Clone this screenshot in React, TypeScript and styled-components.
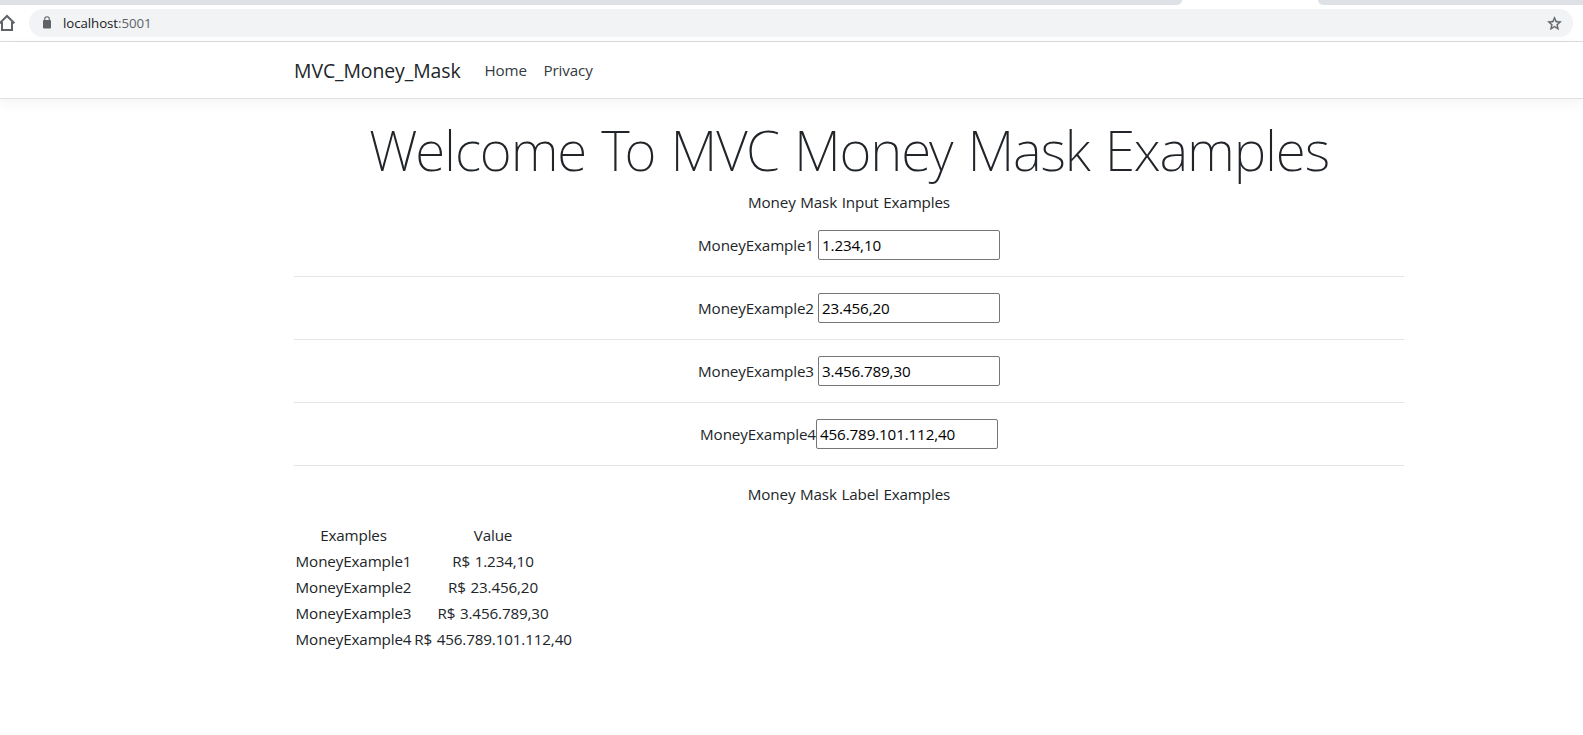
import React from "react";
import styled, { createGlobalStyle } from "styled-components";

const GlobalStyle = createGlobalStyle`
  *, *::before, *::after { box-sizing: border-box; }
  body {
    margin: 0;
    background: #fff;
    color: #212529;
    font-family: "Segoe UI", "Open Sans", "Noto Sans", sans-serif;
    font-size: 15.2px;
    font-weight: 370;
    line-height: 24px;
    letter-spacing: -0.13px;
    word-spacing: 0.8px;
    overflow: hidden;
  }
`;

const TabStrip = styled.div`
  display: flex;
  justify-content: space-between;
  height: 5px;
  background: #fff;
`;

const TabEdge = styled.div<{ $side: "left" | "right" }>`
  width: ${(p) => (p.$side === "left" ? "1182px" : "265px")};
  background: #dee1e6;
  border-radius: ${(p) => (p.$side === "left" ? "0 0 8px 0" : "0 0 0 8px")};
`;

const Toolbar = styled.div`
  display: flex;
  align-items: center;
  height: 37px;
  padding-right: 10px;
  border-bottom: 1px solid #dadce0;
`;

const HomeIcon = styled.svg`
  flex: none;
  width: 20px;
  height: 20px;
  margin: 0 12px 0 -3px;
`;

const AddressBar = styled.div`
  display: flex;
  flex: 1;
  align-items: center;
  height: 28px;
  padding: 0 10px 0 12px;
  border-radius: 14px;
  background: #f1f3f4;
`;

const BarIcon = styled.svg`
  flex: none;
  width: 16px;
  height: 16px;
`;

const StarIcon = styled.svg`
  flex: none;
  width: 17px;
  height: 17px;
`;

const Url = styled.span`
  flex: 1;
  margin-left: 6px;
  font-size: 13.3px;
  letter-spacing: -0.08px;
  color: #202124;
`;

const Port = styled.span`
  color: #5f6368;
`;

const Header = styled.header`
  display: flex;
  align-items: center;
  height: 57px;
  padding-left: 294px;
  border-bottom: 1px solid #dee2e6;
  box-shadow: 0 4px 12px rgba(0, 0, 0, 0.05);
`;

const Brand = styled.a`
  width: 190.5px;
  padding-top: 1px;
  font-size: 19.4px;
  letter-spacing: -0.06px;
  color: #212529;
  white-space: nowrap;
`;

const NavLink = styled.a`
  margin-right: 16.6px;
  color: #343a40;
`;

const Main = styled.main`
  width: 1110px;
  margin: 16px 0 0 294px;
  text-align: center;
`;

const Title = styled.h1`
  margin: 0 0 8px;
  padding-top: 3px;
  font-family: "Segoe UI", "Noto Sans", "Open Sans", sans-serif;
  font-size: 55px;
  font-weight: 250;
  line-height: 64px;
  letter-spacing: -1.15px;
  word-spacing: 2px;
  white-space: nowrap;
`;

const Caption = styled.p`
  margin: 0 0 16px;
`;

const Field = styled.div<{ $gap: number }>`
  display: flex;
  justify-content: center;
  align-items: center;
  gap: ${(p) => p.$gap}px;
  height: 30px;
`;

const FieldLabel = styled.label`
  width: 116px;
  white-space: nowrap;
`;

const Input = styled.input`
  width: 182px;
  height: 30px;
  padding: 1px 3px;
  border: 1px solid #767676;
  border-radius: 2px;
  outline: none;
  background: #fff;
  color: #000;
  font: inherit;
  letter-spacing: -0.13px;
`;

const Rule = styled.hr`
  height: 1px;
  margin: 16px 0;
  border: 0;
  background: #e5e5e5;
`;

const Table = styled.table`
  width: 279px;
  table-layout: fixed;
  border-collapse: collapse;
  white-space: nowrap;
`;

const Cell = styled.td<{ $width: number }>`
  width: ${(p) => p.$width}px;
  height: 26px;
  padding: 1px;
`;

const fields = [
  { name: "MoneyExample1", value: "1.234,10", gap: 4 },
  { name: "MoneyExample2", value: "23.456,20", gap: 4 },
  { name: "MoneyExample3", value: "3.456.789,30", gap: 4 },
  { name: "MoneyExample4", value: "456.789.101.112,40", gap: 0 },
];

const rows = [["Examples", "Value"], ...fields.map((f) => [f.name, `R$ ${f.value}`])];

export default function App() {
  return (
    <>
      <GlobalStyle />
      <TabStrip>
        <TabEdge $side="left" />
        <TabEdge $side="right" />
      </TabStrip>
      <Toolbar>
        <HomeIcon viewBox="0 0 20 20" fill="none" stroke="#5f6368" strokeWidth="2">
          <path d="M2.6 10.3 10 3l7.4 7.3M5 9v8h10V9" />
        </HomeIcon>
        <AddressBar>
          <BarIcon viewBox="0 0 16 16">
            <rect x="2" y="5" width="8" height="8.5" rx="1" fill="#5f6368" />
            <path d="M3.7 5.5V4a2.3 2.3 0 0 1 4.6 0v1.5" fill="none" stroke="#5f6368" strokeWidth="1.1" />
          </BarIcon>
          <Url>
            localhost<Port>:5001</Port>
          </Url>
          <StarIcon viewBox="0 0 24 24" fill="#5f6368" stroke="#5f6368" strokeWidth="0.4">
            <path d="M22 9.24l-7.19-.62L12 2 9.19 8.63 2 9.24l5.46 4.73L5.82 21 12 17.27 18.18 21l-1.63-7.03L22 9.24zM12 15.4l-3.76 2.27 1-4.28-3.32-2.88 4.38-.38L12 6.1l1.71 4.04 4.38.38-3.32 2.88 1 4.28L12 15.4z" />
          </StarIcon>
        </AddressBar>
      </Toolbar>
      <Header>
        <Brand>MVC_Money_Mask</Brand>
        <NavLink>Home</NavLink>
        <NavLink>Privacy</NavLink>
      </Header>
      <Main>
        <Title>Welcome To MVC Money Mask Examples</Title>
        <Caption>Money Mask Input Examples</Caption>
        {fields.map((f) => (
          <React.Fragment key={f.name}>
            <Field $gap={f.gap}>
              <FieldLabel htmlFor={f.name}>{f.name}</FieldLabel>
              <Input id={f.name} defaultValue={f.value} />
            </Field>
            <Rule />
          </React.Fragment>
        ))}
        <Caption>Money Mask Label Examples</Caption>
        <Table>
          <tbody>
            {rows.map(([name, value]) => (
              <tr key={name}>
                <Cell $width={119}>{name}</Cell>
                <Cell $width={160}>{value}</Cell>
              </tr>
            ))}
          </tbody>
        </Table>
      </Main>
    </>
  );
}
